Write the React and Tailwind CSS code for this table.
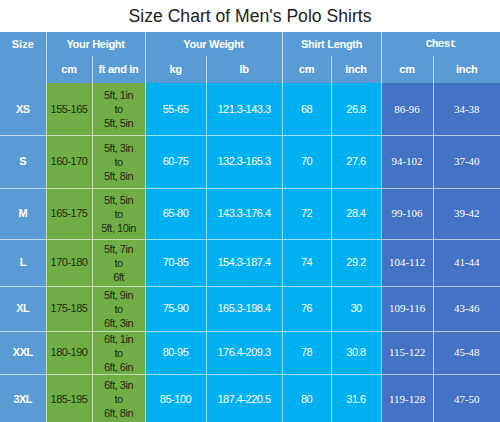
import React from "react";

const rows = [
  { size: "XS", cm: "155-165", ft: ["5ft, 1in", "5ft, 5in"], kg: "55-65", lb: "121.3-143.3", len: "68", lenIn: "26.8", chest: "86-96", chestIn: "34-38", h: "h-[52px]" },
  { size: "S", cm: "160-170", ft: ["5ft, 3in", "5ft, 8in"], kg: "60-75", lb: "132.3-165.3", len: "70", lenIn: "27.6", chest: "94-102", chestIn: "37-40", h: "h-[53px]" },
  { size: "M", cm: "165-175", ft: ["5ft, 5in", "5ft, 10in"], kg: "65-80", lb: "143.3-176.4", len: "72", lenIn: "28.4", chest: "99-106", chestIn: "39-42", h: "h-[51px]" },
  { size: "L", cm: "170-180", ft: ["5ft, 7in", "6ft"], kg: "70-85", lb: "154.3-187.4", len: "74", lenIn: "29.2", chest: "104-112", chestIn: "41-44", h: "h-[47px]" },
  { size: "XL", cm: "175-185", ft: ["5ft, 9in", "6ft, 3in"], kg: "75-90", lb: "165.3-198.4", len: "76", lenIn: "30", chest: "109-116", chestIn: "43-46", h: "h-[45px]" },
  { size: "XXL", cm: "180-190", ft: ["6ft, 1in", "6ft, 6in"], kg: "80-95", lb: "176.4-209.3", len: "78", lenIn: "30.8", chest: "115-122", chestIn: "45-48", h: "h-[42px]" },
  { size: "3XL", cm: "185-195", ft: ["6ft, 3in", "6ft, 8in"], kg: "85-100", lb: "187.4-220.5", len: "80", lenIn: "31.6", chest: "119-128", chestIn: "47-50", h: "h-[49px]" },
];

const head = "bg-[#5b9bd5] text-white font-bold text-[11px] tracking-[-0.3px] text-center align-middle p-0";
const line = "border-l border-white/60";

const App = () => {
  return (
    <div className="w-[500px] h-[422px] bg-white overflow-hidden font-['Liberation_Sans',Arial,sans-serif]">
      <div className="h-[32px] flex items-center justify-center text-[17.6px] text-[#222]">
        Size Chart of Men's Polo Shirts
      </div>
      <table className="w-[500px] table-fixed border-collapse">
        <colgroup>
          <col className="w-[46px]" />
          <col className="w-[46px]" />
          <col className="w-[53px]" />
          <col className="w-[61px]" />
          <col className="w-[76px]" />
          <col className="w-[49px]" />
          <col className="w-[50px]" />
          <col className="w-[52px]" />
          <col className="w-[67px]" />
        </colgroup>
        <thead>
          <tr className="h-[24px]">
            <th rowSpan={2} className="bg-[#5b9bd5] text-white font-bold text-[11px] text-center align-top p-0 pt-[6px] leading-[12px]">Size</th>
            <th colSpan={2} className={`${head} ${line}`}>Your Height</th>
            <th colSpan={2} className={`${head} ${line}`}>Your Weight</th>
            <th colSpan={2} className={`${head} ${line}`}>Shirt Length</th>
            <th colSpan={2} className={`${head} ${line} font-['Liberation_Mono',monospace] text-[10px] tracking-[-0.6px]`}>Chest</th>
          </tr>
          <tr className="h-[27px]">
            <th className={`${head} ${line}`}>cm</th>
            <th className={`${head} ${line}`}>ft and in</th>
            <th className={`${head} ${line}`}>kg</th>
            <th className={`${head} ${line}`}>lb</th>
            <th className={`${head} ${line}`}>cm</th>
            <th className={`${head} ${line}`}>inch</th>
            <th className={`${head} ${line}`}>cm</th>
            <th className={`${head} ${line}`}>inch</th>
          </tr>
        </thead>
        <tbody>
          {rows.map((r, i) => {
            const top = i === 0 ? "" : "border-t border-white/60";
            const cell = `${top} p-0 text-center align-middle text-[11px] tracking-[-0.5px]`;
            return (
              <tr key={r.size}>
                <td className={`${cell} ${r.h} bg-[#5b9bd5] text-white font-bold`}>{r.size}</td>
                <td className={`${cell} ${line} bg-[#70ad47] text-[#1e2d12]`}>{r.cm}</td>
                <td className={`${cell} ${line} bg-[#70ad47] text-[#1e2d12] leading-[14px]`}>
                  <div>{r.ft[0]}</div>
                  <div>to</div>
                  <div>{r.ft[1]}</div>
                </td>
                <td className={`${cell} ${line} bg-[#00b0f0] text-white`}>{r.kg}</td>
                <td className={`${cell} ${line} bg-[#00b0f0] text-white`}>{r.lb}</td>
                <td className={`${cell} ${line} bg-[#00b0f0] text-white`}>{r.len}</td>
                <td className={`${cell} ${line} bg-[#00b0f0] text-white`}>{r.lenIn}</td>
                <td className={`${cell} ${line} bg-[#4472c4] text-white font-['Liberation_Serif',serif] text-[11.5px] tracking-[0px]`}>{r.chest}</td>
                <td className={`${cell} ${line} bg-[#4472c4] text-white font-['Liberation_Serif',serif] text-[11.5px] tracking-[0px]`}>{r.chestIn}</td>
              </tr>
            );
          })}
        </tbody>
      </table>
    </div>
  );
};

export default App;
